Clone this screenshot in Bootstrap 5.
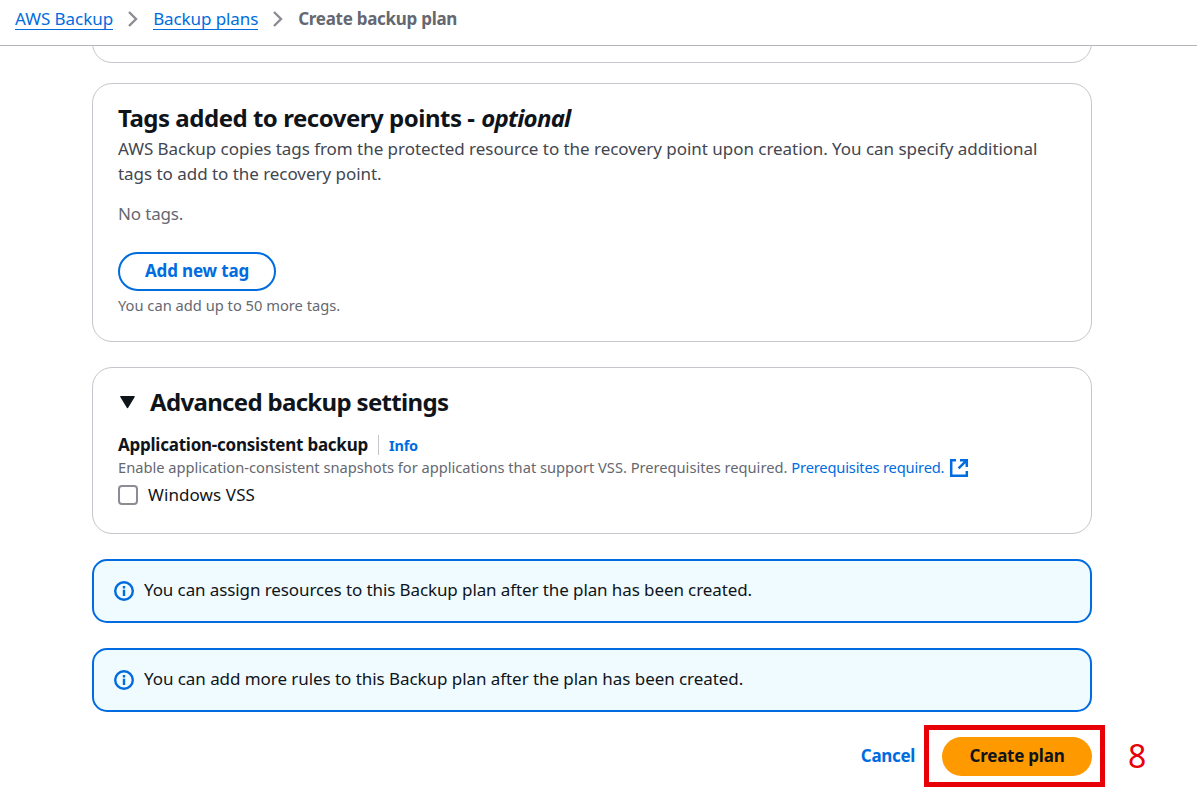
<!DOCTYPE html>
<html lang="en">
<head>
<meta charset="utf-8">
<meta name="viewport" content="width=device-width, initial-scale=1">
<title>Create backup plan</title>
<link href="https://cdn.jsdelivr.net/npm/bootstrap@5.3.0/dist/css/bootstrap.min.css" rel="stylesheet">
<style>
  body { font-family: "Noto Sans", "Open Sans", sans-serif; font-size: 17px; line-height: 25px; color: #0f141a; background: #fff; }
  a { color: #006ce0; text-decoration: none; }
  .topbar { height: 46px; border-bottom: 1px solid #b4b4bb; padding: 0 15px 7px; }
  .topbar a { border-bottom: 1px solid #006ce0; line-height: 21px; }
  .topbar svg { margin: 0 15px; }
  .crumb-now { color: #656871; font-weight: 700; letter-spacing: -.28px; padding-bottom: 2px; }
  .page { width: 1000px; min-height: 764px; margin-left: 92px; }
  .panel { border: 1px solid #c6c6cd; border-radius: 20px; padding: 0 25px; }
  .panel-tail { height: 17px; overflow: hidden; }
  .panel-tail .panel { height: 60px; }
  .panel-tags { height: 259px; margin-top: 20px; padding-top: 19px; }
  .panel-adv { height: 167px; margin-top: 25px; padding-top: 19px; }
  h2 { font-size: 24px; line-height: 30px; font-weight: 700; letter-spacing: -.48px; margin: 0; }
  h2 em { letter-spacing: -.75px; margin-left: 1px; }
  .desc { color: #424650; letter-spacing: -.04px; margin: 3px 0 0; }
  .muted { color: #656871; }
  .hint { color: #656871; font-size: 14.7px; line-height: 20px; }
  .pill { height: 39px; border-radius: 20px; font-size: 17px; line-height: 25px; font-weight: 700; letter-spacing: -.16px; padding: 0 0 2px; }
  .pill-outline { width: 158px; border: 2px solid #006ce0; color: #006ce0; background: #fff; }
  .pill-primary { width: 150px; border: 0; color: #0f141a; background: #ff9900; letter-spacing: -.23px; }
  .label { font-weight: 700; letter-spacing: -.24px; }
  .info-link { font-size: 14.5px; font-weight: 700; letter-spacing: -.2px; line-height: 20px; border-left: 1px solid #c6c6cd; margin-left: 10px; padding-left: 10px; }
  .form-check-input.vss { width: 20px; height: 20px; margin: 0 10px 0 0; border: 2px solid #8c8c94; border-radius: 4px; }
  .note { height: 64px; margin-top: 25px; border: 2px solid #006ce0; border-radius: 15px; background: #f0fbff; padding: 0 20px 2px; }
  .note span { letter-spacing: -.1px; margin-left: 10px; padding-bottom: 1px; }
  .note svg { margin-top: 2px; }
  .actions { margin-top: 25px; }
  .callout-box { position: absolute; left: -18px; top: -12px; width: 181px; height: 62px; border: 5px solid #e80009; pointer-events: none; }
  .callout-num { position: absolute; left: 186px; top: -1px; font-size: 32px; line-height: 40px; color: #e80009; }
</style>
</head>
<body>
<nav class="topbar d-flex align-items-center" aria-label="Breadcrumb">
  <a href="#" style="letter-spacing:-.04px">AWS Backup</a>
  <svg width="10" height="16" viewBox="0 0 10 16" fill="none" stroke="#8c8c94" stroke-width="2.4"><path d="M1 1l7 7-7 7"/></svg>
  <a href="#" style="letter-spacing:-.1px">Backup plans</a>
  <svg width="10" height="16" viewBox="0 0 10 16" fill="none" stroke="#8c8c94" stroke-width="2.4"><path d="M1 1l7 7-7 7"/></svg>
  <span class="crumb-now">Create backup plan</span>
</nav>

<main class="page">
  <div class="panel-tail d-flex align-items-end"><div class="panel w-100 flex-shrink-0"></div></div>

  <section class="panel panel-tags">
    <h2>Tags added to recovery points - <em>optional</em></h2>
    <p class="desc">AWS Backup copies tags from the protected resource to the recovery point upon creation. You can specify additional<br>tags to add to the recovery point.</p>
    <p class="muted" style="margin:15px 0 26px;letter-spacing:-.15px">No tags.</p>
    <button class="btn pill pill-outline d-block" type="button">Add new tag</button>
    <div class="hint" style="margin-top:4px">You can add up to 50 more tags.</div>
  </section>

  <section class="panel panel-adv">
    <div class="d-flex align-items-center">
      <svg width="32" height="20" viewBox="0 0 32 20"><path d="M2.8 4.6h13.4L9.5 15.6z" fill="#0f141a" stroke="#0f141a" stroke-width="1.2" stroke-linejoin="round"/></svg>
      <h2 style="letter-spacing:-.68px">Advanced backup settings</h2>
    </div>
    <div class="d-flex align-items-center" style="margin-top:15px">
      <span class="label">Application-consistent backup</span><a class="info-link" href="#">Info</a>
    </div>
    <div class="hint d-flex align-items-center text-nowrap">
      <span style="letter-spacing:-.02px">Enable application-consistent snapshots for applications that support VSS. Prerequisites required.</span>
      <a href="#" class="ms-1" style="letter-spacing:-.18px">Prerequisites required.</a>
      <svg style="margin:1px 0 -1px 5px" width="20" height="20" viewBox="0 0 20 20" fill="none" stroke="#006ce0" stroke-width="2.5"><path d="M7 2.2H2.2v15.6h15.6V13M11 2.2h6.8V9M17.6 2.4L9.6 10.4"/></svg>
    </div>
    <label class="d-flex align-items-center" style="margin-top:5px">
      <input class="form-check-input vss" type="checkbox"><span style="letter-spacing:.1px">Windows VSS</span>
    </label>
  </section>

  <div class="note d-flex align-items-center">
    <svg width="20" height="20" viewBox="0 0 20 20"><circle cx="10" cy="10" r="8.8" fill="none" stroke="#006ce0" stroke-width="2.4"/><path d="M8.8 5h2.4v2.4H8.8zM8.8 8.8h2.4V15H8.8z" fill="#006ce0"/></svg>
    <span>You can assign resources to this Backup plan after the plan has been created.</span>
  </div>
  <div class="note d-flex align-items-center">
    <svg width="20" height="20" viewBox="0 0 20 20"><circle cx="10" cy="10" r="8.8" fill="none" stroke="#006ce0" stroke-width="2.4"/><path d="M8.8 5h2.4v2.4H8.8zM8.8 8.8h2.4V15H8.8z" fill="#006ce0"/></svg>
    <span style="letter-spacing:-.06px">You can add more rules to this Backup plan after the plan has been created.</span>
  </div>

  <div class="actions d-flex justify-content-end align-items-center">
    <a href="#" class="label" style="margin-right:27px;padding-bottom:2px;letter-spacing:-.33px">Cancel</a>
    <div class="position-relative">
      <button class="btn pill pill-primary d-block" type="button">Create plan</button>
      <div class="callout-box"></div>
      <div class="callout-num">8</div>
    </div>
  </div>
</main>
<script src="https://cdn.jsdelivr.net/npm/bootstrap@5.3.0/dist/js/bootstrap.bundle.min.js"></script>
</body>
</html>
